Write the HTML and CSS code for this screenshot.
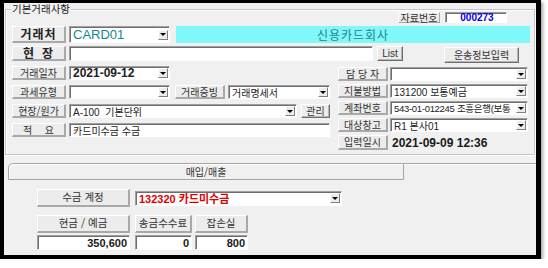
FILE: index.html
```html
<!DOCTYPE html>
<html lang="ko">
<head>
    <meta charset="UTF-8">
    <title>기본거래사항</title>
    <link rel="stylesheet" href="styles.css">
</head>
<body>
    <div class="window">
        <div class="group">
            <span class="legend">기본거래사항</span>

            <div class="doc-row">
                <div class="lbl doc-lbl">자료번호</div>
                <div class="fld doc-no">000273</div>
            </div>

            <div class="row row-main">
                <div class="lbl lbl-big">거래처</div>
                <div class="fld combo w-101 card"><span class="val">CARD01</span><span class="drop"></span></div>
                <div class="cyan">신용카드회사</div>
            </div>

            <div class="row row-site">
                <div class="lbl lbl-big spread"><span>현</span><span>장</span></div>
                <div class="fld w-304"></div>
                <div class="btn btn-list">List</div>
                <div class="btn btn-ship">운송정보입력</div>
            </div>

            <div class="cols">
                <div class="col-left">
                    <div class="row">
                        <div class="lbl">거래일자</div>
                        <div class="fld combo w-101"><span class="val date">2021-09-12</span><span class="drop"></span></div>
                    </div>
                    <div class="row">
                        <div class="lbl">과세유형</div>
                        <div class="fld combo w-101"><span class="val"></span><span class="drop"></span></div>
                        <div class="lbl lbl-mid">거래증빙</div>
                        <div class="fld combo w-102"><span class="val">거래명세서</span><span class="drop"></span></div>
                    </div>
                    <div class="row">
                        <div class="lbl">현장/원가</div>
                        <div class="fld combo w-228"><span class="val">A-100&nbsp;&nbsp;기본단위</span><span class="drop"></span></div>
                        <div class="btn btn-manage">관리</div>
                    </div>
                    <div class="row">
                        <div class="lbl spread"><span>적</span><span>요</span></div>
                        <div class="fld w-261"><span class="val">카드미수금 수금</span></div>
                    </div>
                </div>

                <div class="col-right">
                    <div class="row">
                        <div class="lbl lbl-r">담 당 자</div>
                        <div class="fld combo w-138"><span class="val"></span><span class="drop"></span></div>
                    </div>
                    <div class="row">
                        <div class="lbl lbl-r">지불방법</div>
                        <div class="fld combo w-138"><span class="val">131200 보통예금</span><span class="drop"></span></div>
                    </div>
                    <div class="row">
                        <div class="lbl lbl-r">계좌번호</div>
                        <div class="fld combo w-138"><span class="val tight">543-01-012245 조흥은행(보통</span><span class="drop"></span></div>
                    </div>
                    <div class="row">
                        <div class="lbl lbl-r">대상창고</div>
                        <div class="fld combo w-138"><span class="val">R1 본사01</span><span class="drop"></span></div>
                    </div>
                    <div class="row row-stamp">
                        <div class="lbl lbl-r">입력일시</div>
                        <div class="stamp">2021-09-09 12:36</div>
                    </div>
                </div>
            </div>
        </div>

        <div class="tabs">
            <div class="tab">매입/매출</div>
            <div class="tab-rest"></div>
        </div>

        <div class="pane">
            <div class="row row-account">
                <div class="lbl lbl-pane">수금 계정</div>
                <div class="fld combo w-207 account"><span class="val">132320 카드미수금</span><span class="drop"></span></div>
            </div>

            <div class="amounts">
                <div class="amt amt-cash">
                    <div class="lbl lbl-pane">현금 / 예금</div>
                    <div class="fld num">350,600</div>
                </div>
                <div class="amt amt-fee">
                    <div class="lbl lbl-pane">송금수수료</div>
                    <div class="fld num">0</div>
                </div>
                <div class="amt amt-loss">
                    <div class="lbl lbl-pane">잡손실</div>
                    <div class="fld num">800</div>
                </div>
            </div>
        </div>
    </div>
</body>
</html>
```

FILE: styles.css
```css
* {
    box-sizing: border-box;
}
body {
    margin: 0;
    background: #fff;
    font-family: "Liberation Sans", "Noto Sans CJK KR", sans-serif;
    font-size: 10px;
    color: #222;
}
.window {
    width: 541px;
    height: 259px;
    border: solid #000;
    border-width: 3px 5px 4px 4px;
    background: #f0f0f0;
    box-shadow: 2px 2px 3px rgba(0, 0, 0, 0.35);
}

/* group box */
.group {
    position: relative;
    margin: 6px 0 0 1px;
    width: 530px;
    height: 146px;
    border: 1px solid #c6c6c6;
    box-shadow: inset 1px 1px 0 #fff, 1px 1px 0 #fff;
    padding-left: 6px;
}
.legend {
    position: absolute;
    left: 5px;
    top: -7px;
    padding: 0 1px;
    background: #f0f0f0;
    font-family: "Noto Sans CJK KR", sans-serif;
    font-size: 10.5px;
    line-height: 12px;
    color: #1a1a1a;
}
.row {
    display: flex;
    align-items: center;
    height: 14px;
}

/* labels, fields, buttons */
.lbl {
    display: flex;
    align-items: center;
    justify-content: center;
    height: 100%;
    width: 54px;
    background: #ececec;
    border: solid;
    border-width: 1px 2px 2px 1px;
    border-color: #fff #a8a8a8 #a8a8a8 #fff;
    font-family: "Noto Sans CJK KR", sans-serif;
    font-size: 10px;
    line-height: 1;
    color: #333;
    white-space: nowrap;
}
.lbl-big {
    font-size: 12px;
    font-weight: bold;
    letter-spacing: 1px;
    color: #222;
}
.spread {
    justify-content: space-between;
    padding: 0 10px;
}
.fld {
    display: flex;
    align-items: center;
    height: 100%;
    background: #fff;
    border: 1px solid;
    border-color: #a0a0a0 #fff #fff #a0a0a0;
    box-shadow: inset 1px 1px 0 #6e6e6e;
    padding: 0 1px 0 3px;
    white-space: nowrap;
    overflow: hidden;
    font-size: 10px;
}
.combo .val {
    flex: 1;
    overflow: hidden;
}
.tight {
    font-size: 9.5px;
    letter-spacing: -0.3px;
}
.drop {
    flex: none;
    display: flex;
    align-items: center;
    justify-content: center;
    width: 10px;
    height: 10px;
    background: #ececec;
    border: solid 1px;
    border-color: #fff #808080 #808080 #fff;
}
.drop::after {
    content: "";
    border-left: 3px solid transparent;
    border-right: 3px solid transparent;
    border-top: 3px solid #000;
}
.btn {
    display: flex;
    align-items: center;
    justify-content: center;
    height: 100%;
    background: #ececec;
    border: solid 1px;
    border-color: #fff #6e6e6e #6e6e6e #fff;
    box-shadow: inset -1px -1px 0 #b4b4b4;
    font-family: "Noto Sans CJK KR", sans-serif;
    font-size: 10px;
    line-height: 1;
    color: #333;
}

/* widths */
.w-101 { width: 101px; }
.w-102 { width: 102px; }
.w-138 { width: 138px; }
.w-207 { width: 207px; }
.w-228 { width: 228px; }
.w-261 { width: 261px; }
.w-304 { width: 304px; }

/* top rows */
.doc-row {
    display: flex;
    height: 11px;
    margin-top: 2px;
    padding-left: 386px;
    gap: 5px;
}
.doc-lbl {
    width: 42px;
    border-width: 1px;
}
.doc-no {
    width: 62px;
    justify-content: center;
    color: #0000e6;
    font-weight: bold;
    font-size: 10px;
}
.row-main {
    height: 17px;
    margin-top: 3px;
    gap: 3px;
}
.card {
    font-size: 13px;
    color: #128a8a;
}
.cyan {
    width: 354px;
    height: 100%;
    margin-left: 3px;
    background: #80f7f8;
    text-align: center;
    font-family: "Noto Sans CJK KR", sans-serif;
    font-size: 12px;
    line-height: 17px;
    letter-spacing: 1px;
    color: #1f8686;
}
.row-site {
    height: 15px;
    margin-top: 3px;
    gap: 3px;
}
.btn-list {
    width: 26px;
    margin-left: 1px;
    font-family: "Liberation Sans", sans-serif;
}
.btn-ship {
    width: 75px;
    height: 16px;
    margin: 2px 0 0 38px;
}

/* two column block */
.cols {
    display: flex;
    gap: 8px;
    margin-top: 5px;
}
.col-left {
    display: flex;
    flex-direction: column;
    gap: 5px;
    width: 318px;
}
.col-left .row {
    gap: 3px;
}
.lbl-mid {
    width: 50px;
    margin-left: 2px;
}
.btn-manage {
    width: 29px;
    margin-left: 1px;
}
.date {
    font-weight: bold;
    font-size: 12px;
}
.col-right {
    display: flex;
    flex-direction: column;
    gap: 3px;
    width: 190px;
    padding-top: 1px;
}
.col-right .row {
    gap: 2px;
}
.lbl-r {
    width: 50px;
}
.row-stamp {
    height: 15px;
}
.stamp {
    margin-left: 2px;
    font-weight: bold;
    font-size: 12px;
    color: #1a1a1a;
}

/* tab */
.tabs {
    display: flex;
    height: 17px;
    margin: 8px 0 0 4px;
}
.tab {
    width: 396px;
    border: 1px solid #a4a4a4;
    border-radius: 5px 0 0 0;
    box-shadow: inset 1px 1px 0 #fff;
    text-align: center;
    font-family: "Noto Sans CJK KR", sans-serif;
    font-size: 10px;
    line-height: 15px;
    color: #333;
}
.tab-rest {
    flex: 1;
    border-top: 1px solid #a4a4a4;
    box-shadow: inset 0 1px 0 #fff;
}

/* pane */
.pane {
    padding: 9px 0 0 33px;
}
.row-account {
    height: 18px;
    gap: 5px;
}
.lbl-pane {
    width: 93px;
    font-size: 10.5px;
}
.account {
    height: 15px;
    color: #e00000;
    font-weight: bold;
    font-size: 11px;
}
.amounts {
    display: flex;
    gap: 3px;
    margin-top: 8px;
}
.amt {
    display: flex;
    flex-direction: column;
    gap: 2px;
}
.amt .lbl {
    height: 18px;
}
.amt-cash {
    width: 93px;
    margin-right: 2px;
}
.amt-cash .lbl,
.amt-fee .lbl,
.amt-loss .lbl {
    width: 100%;
}
.amt-fee {
    width: 57px;
}
.amt-loss {
    width: 53px;
}
.num {
    height: 15px;
    justify-content: flex-end;
    padding-right: 2px;
    font-weight: bold;
    font-size: 11px;
    color: #1a1a1a;
}
```
